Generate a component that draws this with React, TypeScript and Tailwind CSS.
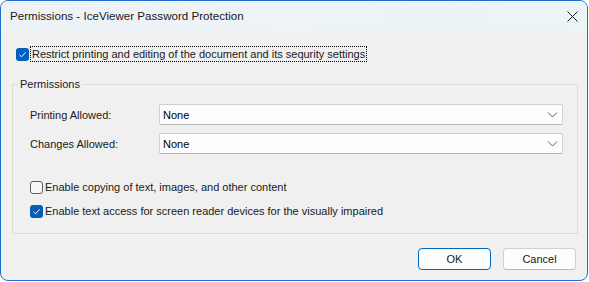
import React from 'react';

const font = { fontFamily: '"Segoe UI", "Liberation Sans", Arial, sans-serif' };

function Check({ checked }: { checked: boolean }) {
	if (!checked) {
		return <span className="block w-[13px] h-[13px] shrink-0 rounded-[3px] border border-[#5f5f5f] bg-[#f7f7f7]" />;
	}
	return (
		<span className="flex w-[13px] h-[13px] shrink-0 items-center justify-center rounded-[3px] bg-[#005fb8]">
			<svg width="9" height="9" viewBox="0 0 9 9" fill="none">
				<path d="M1.5 4.8 L3.6 6.8 L7.6 2.4" stroke="white" strokeWidth="1" />
			</svg>
		</span>
	);
}

function Dropdown({ value }: { value: string }) {
	return (
		<div className="flex items-center w-[404px] h-[21px] bg-[#fdfdfd] border border-[#d0d0d0] border-b-[#b4b4b4] rounded-[2px] pl-[3px] pr-[4px]">
			<span className="flex-1 text-[#000]">{value}</span>
			<svg width="11" height="6" viewBox="0 0 11 6" fill="none">
				<path d="M1 0.5 L5.5 5 L10 0.5" stroke="#606060" strokeWidth="1" />
			</svg>
		</div>
	);
}

function Btn({ label, primary }: { label: string; primary?: boolean }) {
	return (
		<button
			className={`w-[73px] h-[22px] rounded-[4px] bg-[#fdfdfd] text-[#1a1a1a] flex items-center justify-center border ${
				primary ? 'border-[#0067c0]' : 'border-[#d0d0d0] border-b-[#b8b8b8]'
			}`}
		>
			{label}
		</button>
	);
}

export default function App() {
	return (
		<div className="bg-white w-[589px] h-[282px] text-[11px] leading-[16px] text-[#1a1a1a]" style={font}>
			<div className="w-[588px] h-[281px] border border-[#1f6fd0] rounded-[8px] overflow-hidden flex flex-col bg-[#f0f0f0]">
				{/* Title bar */}
				<div className="h-[30px] shrink-0 flex items-center pl-[9px] bg-gradient-to-r from-[#eef2f6] to-[#ecf4f6]">
					<span className="flex-1 text-[11.6px] text-[#1a1a1a]">Permissions - IceViewer Password Protection</span>
					<svg width="11" height="11" viewBox="0 0 11 11" className="mr-[9px]" fill="none">
						<path d="M0.5 0.5 L10.5 10.5 M10.5 0.5 L0.5 10.5" stroke="#1a1a1a" strokeWidth="1" />
					</svg>
				</div>

				{/* Body */}
				<div className="flex flex-col pt-[15px]">
					<div className="flex items-center h-[16px] pl-[15px] gap-[2px]">
						<Check checked />
						<span className="outline-1 outline-dotted outline-black px-[1px] leading-[14px]">
							Restrict printing and editing of the document and its sequrity settings
						</span>
					</div>

					<fieldset className="ml-[11px] mt-[14px] w-[566px] border border-[#dcdcdc] rounded-none">
						<legend className="ml-[5px] px-[2px] text-[#1a1a1a]">Permissions</legend>
						<div className="pl-[17px] pt-[12px] pb-[14px] flex flex-col">
							<div className="flex items-center h-[21px]">
								<span className="w-[129px]">Printing Allowed:</span>
								<Dropdown value="None" />
							</div>
							<div className="flex items-center h-[21px] mt-[8px]">
								<span className="w-[129px]">Changes Allowed:</span>
								<Dropdown value="None" />
							</div>
							<div className="flex items-center h-[16px] mt-[25px] gap-[2px]">
								<Check checked={false} />
								<span>Enable copying of text, images, and other content</span>
							</div>
							<div className="flex items-center h-[16px] mt-[8px] gap-[2px]">
								<Check checked />
								<span>Enable text access for screen reader devices for the visually impaired</span>
							</div>
						</div>
					</fieldset>

					<div className="flex justify-end gap-[12px] mt-[14px] pr-[11px]">
						<Btn label="OK" primary />
						<Btn label="Cancel" />
					</div>
				</div>
			</div>
		</div>
	);
}
